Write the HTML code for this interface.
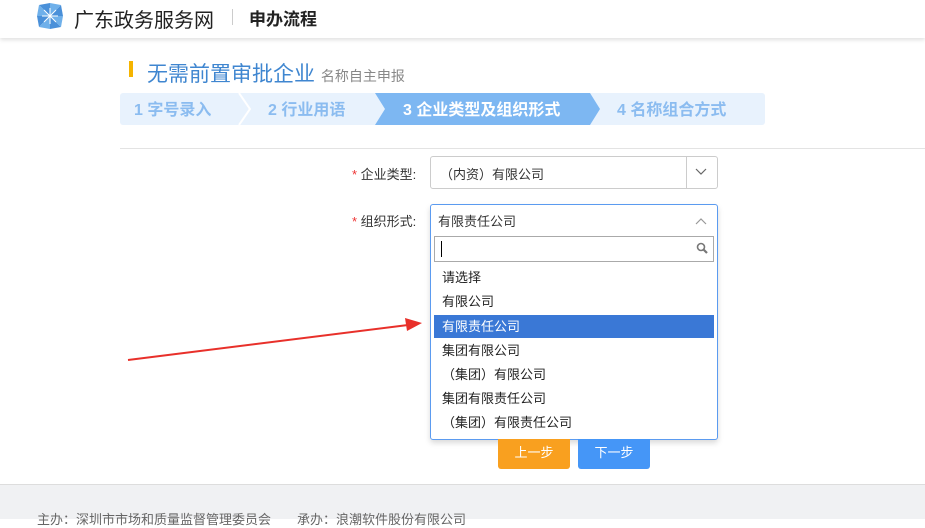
<!DOCTYPE html>
<html><head><meta charset="utf-8"><style>
*{margin:0;padding:0;box-sizing:border-box}
body{width:925px;height:519px;overflow:hidden;background:#fff;font-family:"Liberation Sans","Noto Sans CJK SC",sans-serif;position:relative}
.a{position:absolute}
.opt{position:absolute;left:3px;width:280px;height:23px;line-height:23px;padding-left:8px;font-size:13px;color:#222}
</style></head><body>
<div class="a" style="left:0;top:0;width:925px;height:38px;background:#fff;box-shadow:0 2px 4px rgba(0,0,0,.12)"></div>
<svg class="a" style="left:36px;top:2px" width="28" height="28" viewBox="0 0 28 28">
<g fill="#4a90d9"><path d="M14 14 L3 3 L14 1 Z"/><path d="M14 14 L25 3 L27 14 Z"/><path d="M14 14 L25 25 L14 27 Z"/><path d="M14 14 L3 25 L1 14 Z"/><path d="M14 14 L14 1 L25 3Z" fill="#6fb0ea"/><path d="M14 14 L27 14 L25 25Z" fill="#6fb0ea"/><path d="M14 14 L14 27 L3 25Z" fill="#6fb0ea"/><path d="M14 14 L1 14 L3 3Z" fill="#6fb0ea"/></g>
<g stroke="#fff" stroke-width="1"><line x1="14" y1="6" x2="14" y2="22"/><line x1="6" y1="14" x2="22" y2="14"/><line x1="8" y1="8" x2="20" y2="20"/><line x1="20" y1="8" x2="8" y2="20"/></g></svg>
<div class="a" style="left:74px;top:4px;font-size:20px;color:#222">广东政务服务网</div>
<div class="a" style="left:232px;top:9px;width:1px;height:16px;background:#ccc"></div>
<div class="a" style="left:249px;top:5px;font-size:17px;font-weight:bold;color:#222">申办流程</div>

<div class="a" style="left:129px;top:61px;width:4px;height:16px;background:#f5b400"></div>
<div class="a" style="left:147px;top:58px;font-size:21px;color:#3f86d0">无需前置审批企业 <span style="font-size:14px;color:#888">名称自主申报</span></div>

<svg class="a" style="left:120px;top:93px" width="645" height="32">
<rect x="0" y="0" width="645" height="32" rx="3" fill="#e8f2fd"/>
<polygon points="255,0 470,0 480,16 470,32 255,32 265,16" fill="#7db7f2"/>
<polyline points="119,0 130,16 119,32" fill="none" stroke="#fff" stroke-width="2"/>
<g font-size="16" font-weight="bold" font-family="Liberation Sans,Noto Sans CJK SC,sans-serif">
<text x="14" y="22" fill="#8bbcf0">1 字号录入</text>
<text x="148" y="22" fill="#8bbcf0">2 行业用语</text>
<text x="283" y="22" fill="#fff">3 企业类型及组织形式</text>
<text x="497" y="22" fill="#8bbcf0">4 名称组合方式</text></g>
</svg>
<div class="a" style="left:120px;top:148px;width:805px;height:1px;background:#e3e3e3"></div>

<div class="a" style="left:352px;top:164px;font-size:13px;color:#333"><span style="color:#e33">*</span> 企业类型:</div>
<div class="a" style="left:430px;top:156px;width:288px;height:33px;border:1px solid #ccc;border-radius:3px"></div>
<div class="a" style="left:686px;top:157px;width:1px;height:31px;background:#ccc"></div>
<div class="a" style="left:440px;top:164px;font-size:13px;color:#333">（内资）有限公司</div>
<svg class="a" style="left:695px;top:168px" width="12" height="8"><polyline points="1,1 6,6 11,1" fill="none" stroke="#666" stroke-width="1.2"/></svg>

<div class="a" style="left:352px;top:211px;font-size:13px;color:#333"><span style="color:#e33">*</span> 组织形式:</div>
<div class="a" style="left:430px;top:204px;width:288px;height:236px;border:1px solid #5b9bf0;border-radius:3px;box-shadow:0 3px 6px rgba(0,0,0,.15);background:#fff">
<div class="a" style="left:7px;top:6px;font-size:13px;color:#333">有限责任公司</div>
<svg class="a" style="left:264px;top:12px" width="12" height="8"><polyline points="1,7 6,2 11,7" fill="none" stroke="#999" stroke-width="1.2"/></svg>
<div class="a" style="left:3px;top:31px;width:280px;height:26px;border:1px solid #aaa;background:#fff"></div>
<div class="a" style="left:10px;top:36px;width:1px;height:16px;background:#000"></div>
<svg class="a" style="left:265px;top:37px" width="13" height="13"><circle cx="5" cy="5" r="3.5" fill="none" stroke="#777" stroke-width="1.6"/><line x1="7.5" y1="7.5" x2="11" y2="11" stroke="#777" stroke-width="2.2"/></svg>
<div class="opt" style="top:61px">请选择</div>
<div class="opt" style="top:85px">有限公司</div>
<div class="opt" style="top:110px;background:#3a78d6;color:#fff">有限责任公司</div>
<div class="opt" style="top:134px">集团有限公司</div>
<div class="opt" style="top:158px">（集团）有限公司</div>
<div class="opt" style="top:182px">集团有限责任公司</div>
<div class="opt" style="top:206px">（集团）有限责任公司</div>
</div>

<div class="a" style="left:498px;top:439px;width:72px;height:30px;background:#f9a01f;border-radius:0 0 3px 3px;color:#fff;font-size:13px;text-align:center;line-height:28px">上一步</div>
<div class="a" style="left:578px;top:439px;width:72px;height:30px;background:#4596f7;border-radius:0 0 3px 3px;color:#fff;font-size:13px;text-align:center;line-height:28px">下一步</div>

<svg class="a" style="left:0;top:0" width="925" height="519"><line x1="128" y1="360" x2="408" y2="325" stroke="#e8302a" stroke-width="2"/><polygon points="422,323 405,318 407,331" fill="#e8302a"/></svg>

<div class="a" style="left:0;top:484px;width:925px;height:35px;background:#f0f1f3;border-top:1px solid #ddd"></div>
<div class="a" style="left:37px;top:509px;font-size:13px;color:#666">主办：深圳市市场和质量监督管理委员会　　承办：浪潮软件股份有限公司</div>
</body></html>
